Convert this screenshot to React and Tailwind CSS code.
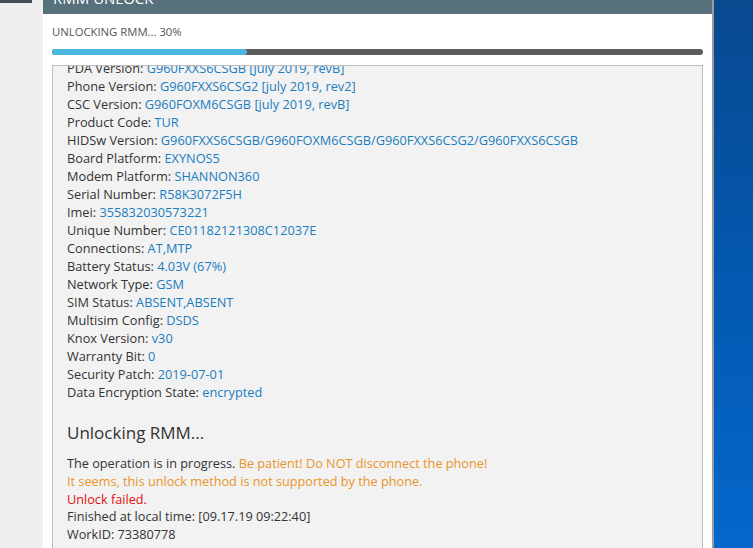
import React from 'react';

const info = [
  ['PDA Version', 'G960FXXS6CSGB [july 2019, revB]'],
  ['Phone Version', 'G960FXXS6CSG2 [july 2019, rev2]'],
  ['CSC Version', 'G960FOXM6CSGB [july 2019, revB]'],
  ['Product Code', 'TUR'],
  ['HIDSw Version', 'G960FXXS6CSGB/G960FOXM6CSGB/G960FXXS6CSG2/G960FXXS6CSGB'],
  ['Board Platform', 'EXYNOS5'],
  ['Modem Platform', 'SHANNON360'],
  ['Serial Number', 'R58K3072F5H'],
  ['Imei', '355832030573221'],
  ['Unique Number', 'CE01182121308C12037E'],
  ['Connections', 'AT,MTP'],
  ['Battery Status', '4.03V (67%)'],
  ['Network Type', 'GSM'],
  ['SIM Status', 'ABSENT,ABSENT'],
  ['Multisim Config', 'DSDS'],
  ['Knox Version', 'v30'],
  ['Warranty Bit', '0'],
  ['Security Patch', '2019-07-01'],
  ['Data Encryption State', 'encrypted'],
];

export default function App() {
  const progress = 30;

  return (
    <div
      className="flex h-[548px] w-[753px] overflow-hidden bg-[#efefef]"
      style={{ fontFamily: '"Open Sans", "Liberation Sans", sans-serif' }}
    >
      {/* left strip of the window behind */}
      <div className="w-[43px] shrink-0">
        <div className="h-[3px] w-[32px] bg-[#414d58]" />
      </div>

      {/* dialog */}
      <div className="flex w-[669px] shrink-0 flex-col bg-white">
        <div className="h-[14px] shrink-0 overflow-hidden bg-[#56707c] px-[10px]">
          <div className="-mt-[12px] text-[15px] leading-[20px] text-white">RMM UNLOCK</div>
        </div>

        <div className="flex min-h-0 flex-1 flex-col px-[9px]">
          <div className="mt-[11px] h-[14px] text-[11.3px] leading-[14px] text-[#555] uppercase">
            Unlocking RMM... {progress}%
          </div>
          <div className="mt-[10px] h-[6px] w-[651px] overflow-hidden rounded-full bg-[#5b5b5b]">
            <div className="h-full rounded-full bg-[#4db8df]" style={{ width: `${progress}%` }} />
          </div>

          <div className="mt-[10px] min-h-0 w-[651px] flex-1 overflow-hidden border border-b-0 border-[#bdbdbd] bg-[#f2f2f2] px-[14px]">
            <div className="-mt-[7px] text-[12.75px] leading-[18px] text-[#333]">
              {info.map(([label, value]) => (
                <div key={label}>
                  {label}: <span className="text-[#1a7dc0]">{value}</span>
                </div>
              ))}
            </div>

            <h3 className="mt-[20px] text-[17px] leading-[24px] text-[#333]">Unlocking RMM...</h3>

            <div className="mt-[10px] text-[12.7px] leading-[17.75px] text-[#333]">
              <div>
                The operation is in progress.{' '}
                <span className="text-[#e8952a]">Be patient! Do NOT disconnect the phone!</span>
              </div>
              <div className="text-[#e8952a]">It seems, this unlock method is not supported by the phone.</div>
              <div className="text-[#e01010]">Unlock failed.</div>
              <div>Finished at local time: [09.17.19 09:22:40]</div>
              <div>WorkID: 73380778</div>
            </div>
          </div>
        </div>
      </div>

      {/* window edge */}
      <div className="w-[2px] shrink-0 bg-[#9a9a9a]" />

      {/* desktop */}
      <div className="flex-1 bg-gradient-to-b from-[#08498f] via-[#0358b0] to-[#0567cc]" />
    </div>
  );
}
